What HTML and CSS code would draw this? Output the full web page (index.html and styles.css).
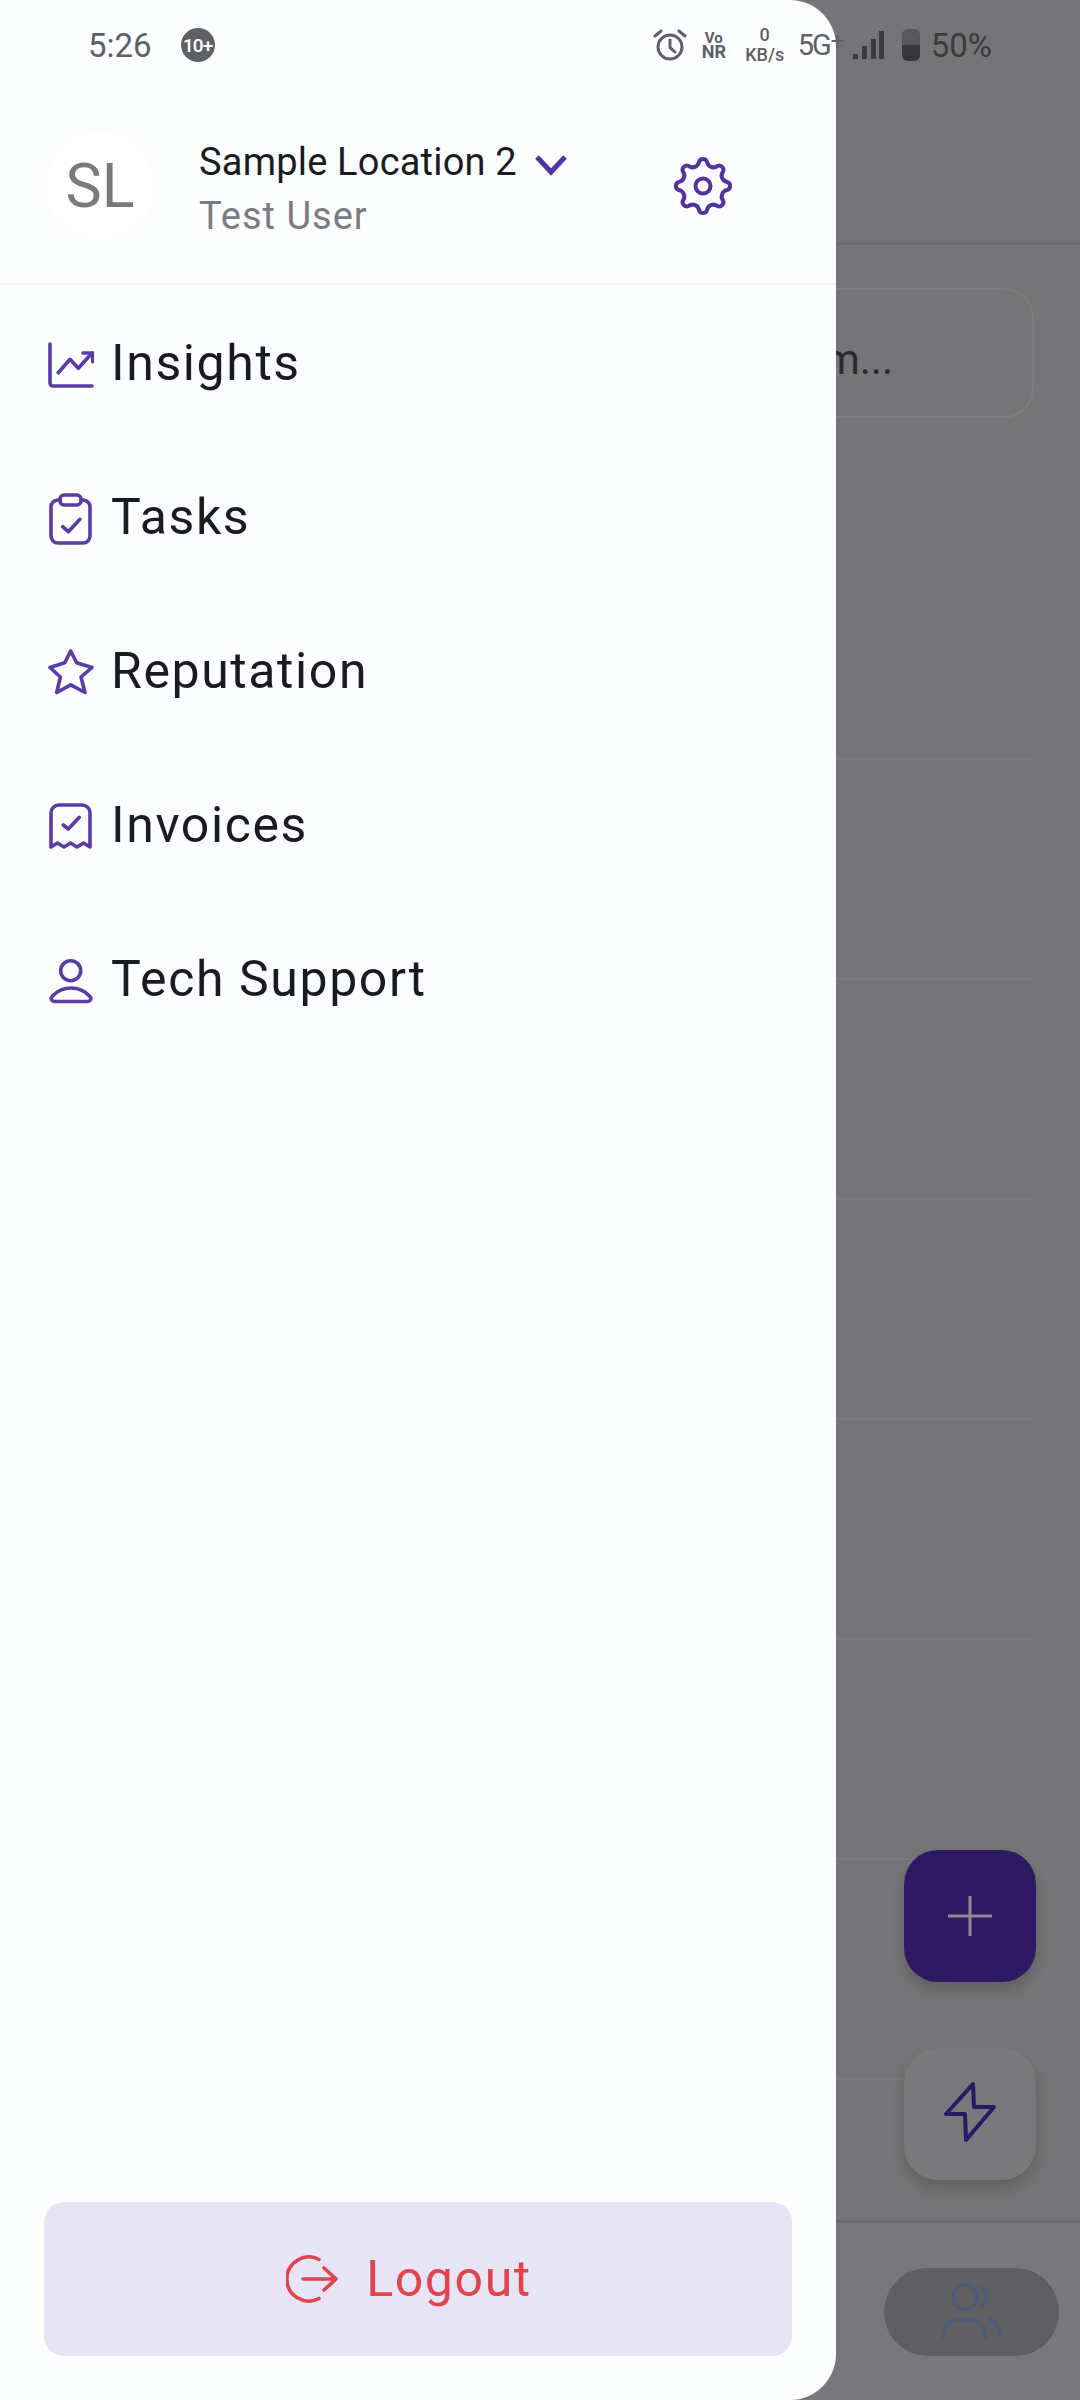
FILE: index.html
```html
<!DOCTYPE html>
<html lang="en">
<head>
  <meta charset="UTF-8" />
  <meta name="viewport" content="width=device-width, initial-scale=1.0"/>
  <title>Navigation drawer</title>
  <link rel="stylesheet" href="styles.css">
</head>
<body>
  <div class="screen">

    <!-- page behind the scrim -->
    <div class="backdrop">
      <div class="bd-header"></div>
      <div class="bd-search">m...</div>
      <div class="bd-list">
        <div class="bd-row"></div>
        <div class="bd-row"></div>
        <div class="bd-row"></div>
        <div class="bd-row"></div>
        <div class="bd-row"></div>
        <div class="bd-row"></div>
        <div class="bd-row"></div>
      </div>
      <div class="bd-nav">
        <div class="bd-pill">
          <svg class="people-icon" viewBox="0 0 64 64">
            <circle cx="25" cy="17" r="12"/>
            <path d="M40 7a11 11 0 0 1 0 20"/>
            <path d="M3 58c0-10 6-18 14-18h12c9 0 17 8 17 18"/>
            <path d="M50 39c6 3 10 10 10 19"/>
          </svg>
        </div>
      </div>
      <div class="fab fab-add">
        <svg class="plus-icon" viewBox="0 0 44 40"><path d="M0 20H44M22 0V40"/></svg>
      </div>
      <div class="fab fab-bolt">
        <svg class="bolt-icon" viewBox="0 0 60 70"><path d="M33 5 6 35H25L26 61 54 28H34Z"/></svg>
      </div>
    </div>

    <!-- drawer -->
    <aside class="drawer">
      <header class="drawer-head">
        <div class="avatar">SL</div>
        <div class="who">
          <div class="who-name">
            <span>Sample Location 2</span>
            <svg class="chevron" viewBox="0 0 34 22"><path d="M3 3 17 18 31 3"/></svg>
          </div>
          <div class="who-user">Test User</div>
        </div>
        <svg class="gear" viewBox="-30 -30 60 60">
          <path d="M-4-24.2A4.2 4.2 0 0 1 4-24.2A6.5 6.5 0 0 0 14.28-19.94A4.2 4.2 0 0 1 19.94-14.28A6.5 6.5 0 0 0 24.2-4A4.2 4.2 0 0 1 24.2 4A6.5 6.5 0 0 0 19.94 14.28A4.2 4.2 0 0 1 14.28 19.94A6.5 6.5 0 0 0 4 24.2A4.2 4.2 0 0 1-4 24.2A6.5 6.5 0 0 0-14.28 19.94A4.2 4.2 0 0 1-19.94 14.28A6.5 6.5 0 0 0-24.2 4A4.2 4.2 0 0 1-24.2-4A6.5 6.5 0 0 0-19.94-14.28A4.2 4.2 0 0 1-14.28-19.94A6.5 6.5 0 0 0-4-24.2Z"/>
          <circle cx="0" cy="0" r="7.5"/>
        </svg>
      </header>

      <nav class="menu">
        <a class="menu-item">
          <svg class="menu-icon" viewBox="0 0 46 52">
            <path d="M2 5V44a3 3 0 0 0 3 3H44"/>
            <path d="M10.3 33.7 22 20.3 30.3 29.3 44 14"/>
            <path d="M35 14H44.7V22.7"/>
          </svg>
          <span>Insights</span>
        </a>
        <a class="menu-item">
          <svg class="menu-icon" viewBox="0 0 46 52">
            <path d="M12 7H10a7 7 0 0 0-7 7V43a7 7 0 0 0 7 7H35a7 7 0 0 0 7-7V14a7 7 0 0 0-7-7H33"/>
            <rect x="12" y="2" width="21" height="10" rx="4"/>
            <path d="M14.7 33.7 20.3 38.7 32 26.3"/>
          </svg>
          <span>Tasks</span>
        </a>
        <a class="menu-item">
          <svg class="menu-icon" viewBox="0 0 46 52">
            <path d="M22.7 4 28.6 15.8 44 20.5 33 30 37 45.5 22.7 37.8 8.7 45.5 12.4 30 2 20.5 16.8 15.8Z"/>
          </svg>
          <span>Reputation</span>
        </a>
        <a class="menu-item">
          <svg class="menu-icon" viewBox="0 0 46 52">
            <path d="M3 46V12a8 8 0 0 1 8-8H34a8 8 0 0 1 8 8V46L35.500 42 29 46 22.500 42 16 46 9.500 42Z"/>
            <path d="M15.300 24 20.300 28 31.300 16.300"/>
          </svg>
          <span>Invoices</span>
        </a>
        <a class="menu-item">
          <svg class="menu-icon" viewBox="0 0 46 52">
            <circle cx="22.700" cy="15.700" r="10"/>
            <path d="M6 46.500H40a3 3 0 0 0 2-5C37 36 30 33 23 33S9 36 4 41.500a3 3 0 0 0 2 5Z"/>
          </svg>
          <span>Tech Support</span>
        </a>
      </nav>

      <button class="logout">
        <svg class="logout-icon" viewBox="0 0 52 48">
          <path d="M33 4.500A22 22 0 1 0 33 43.500"/>
          <path d="M17 24H50M38 13 50 24 38 35"/>
        </svg>
        <span>Logout</span>
      </button>
    </aside>

    <!-- status bar sits on top of both -->
    <div class="statusbar">
      <span class="time">5:26</span>
      <span class="notif">10+</span>
      <div class="status-right">
        <svg class="alarm" viewBox="0 0 34 34">
          <circle cx="17" cy="19" r="12"/>
          <path d="M17 12V19.500L22 24"/>
          <path d="M2 8 8 3M32 8 26 3"/>
        </svg>
        <div class="vonr">Vo NR</div>
        <div class="speed">0 KB/s</div>
        <div class="net">5G<span class="net-plus">+</span></div>
        <svg class="signal" viewBox="0 0 32 28">
          <rect x="0" y="23" width="5" height="5"/>
          <rect x="9" y="15" width="5" height="13"/>
          <rect x="18" y="8" width="5" height="20"/>
          <rect x="26" y="0" width="5" height="28"/>
        </svg>
        <div class="battery"><div class="battery-fill"></div></div>
        <span class="pct">50%</span>
      </div>
    </div>

  </div>
</body>
</html>
```

FILE: styles.css
```css
* {
  box-sizing: border-box;
}

body {
  margin: 0;
  font-family: Roboto, 'Liberation Sans', sans-serif;
}

.screen {
  position: relative;
  width: 1080px;
  height: 2400px;
  overflow: hidden;
  background-color: #757476;
}

/* ---- page behind the scrim ---- */
.backdrop {
  display: flex;
  flex-direction: column;
  height: 100%;
}

.bd-header {
  height: 245px;
  flex: none;
  border-bottom: 3px solid #6c6b6d;
}

.bd-search {
  height: 130px;
  flex: none;
  margin: 43px 46px 0;
  padding: 47px 139px 0 0;
  border: 2px solid #7d7c7e;
  border-radius: 30px;
  text-align: right;
  font-size: 42px;
  line-height: 46px;
  color: #2b2a2d;
}

.bd-list {
  margin: 122px 46px 0;
  flex: none;
}

.bd-row {
  height: 220px;
  border-bottom: 2px solid #7b7a7c;
}

.bd-nav {
  margin-top: auto;
  height: 180px;
  flex: none;
  display: flex;
  justify-content: flex-end;
  padding: 45px 21px 0 0;
  border-top: 3px solid #6b6877;
  background-color: #78787a;
}

.bd-pill {
  width: 175px;
  height: 88px;
  display: flex;
  align-items: center;
  justify-content: center;
  border-radius: 44px;
  background-color: #5f5f63;
}

.people-icon {
  width: 64px;
  height: 64px;
  fill: none;
  stroke: #4d5a78;
  stroke-width: 3.5;
  stroke-linecap: round;
}

.fab {
  position: absolute;
  left: 904px;
  width: 132px;
  height: 132px;
  display: flex;
  align-items: center;
  justify-content: center;
  border-radius: 34px;
  box-shadow: 0 8px 14px rgba(0, 0, 0, 0.18);
}

.fab-add {
  top: 1850px;
  background-color: #2e1a63;
}

.fab-bolt {
  top: 2048px;
  background-color: #79787b;
}

.plus-icon {
  width: 44px;
  height: 40px;
  fill: none;
  stroke: #8c8791;
  stroke-width: 3;
}

.bolt-icon {
  width: 60px;
  height: 70px;
  fill: none;
  stroke: #2a1a66;
  stroke-width: 4;
  stroke-linejoin: round;
}

/* ---- drawer ---- */
.drawer {
  position: absolute;
  top: 0;
  left: 0;
  width: 836px;
  height: 2400px;
  display: flex;
  flex-direction: column;
  border-radius: 0 46px 46px 0;
  background-color: #fcfdff;
}

.drawer-head {
  height: 285px;
  flex: none;
  display: flex;
  align-items: center;
  padding: 88px 103px 0 46px;
  border-bottom: 2px solid #f3f3f7;
}

.avatar {
  width: 108px;
  height: 108px;
  flex: none;
  display: flex;
  align-items: center;
  justify-content: center;
  border-radius: 50%;
  background-color: #ffffff;
  font-size: 61px;
  color: #7a797d;
}

.who {
  margin: 7px 0 0 45px;
}

.who-name {
  display: flex;
  align-items: center;
  font-size: 38px;
  line-height: 52px;
  letter-spacing: 0.2px;
  color: #1a1b20;
}

.chevron {
  width: 34px;
  height: 22px;
  margin: 6px 0 0 17px;
  fill: none;
  stroke: #53339f;
  stroke-width: 5;
}

.who-user {
  margin-top: 2px;
  font-size: 38px;
  line-height: 52px;
  letter-spacing: 1px;
  color: #7b7b80;
}

.gear {
  width: 60px;
  height: 60px;
  margin-left: auto;
  fill: none;
  stroke: #53339f;
  stroke-width: 4;
}

.menu {
  flex: none;
}

.menu-item {
  height: 154px;
  display: flex;
  align-items: center;
  padding: 2px 0 0 48px;
  font-size: 50px;
  letter-spacing: 1.6px;
  color: #1a1b20;
}

.menu-icon {
  width: 46px;
  height: 52px;
  flex: none;
  margin: 4px 17px 0 0;
  fill: none;
  stroke: #5b3ba6;
  stroke-width: 3.6;
  stroke-linecap: round;
  stroke-linejoin: round;
}

.logout {
  height: 154px;
  flex: none;
  margin: auto 44px 44px;
  padding: 0 18px 0 0;
  display: flex;
  align-items: center;
  justify-content: center;
  border: none;
  border-radius: 20px;
  background-color: #e7e4f5;
  font-family: inherit;
  font-size: 50px;
  letter-spacing: 1.6px;
  color: #e0444c;
}

.logout-icon {
  width: 52px;
  height: 48px;
  margin-right: 28px;
  fill: none;
  stroke: #e0444c;
  stroke-width: 3.6;
  stroke-linecap: round;
  stroke-linejoin: round;
}

/* ---- status bar ---- */
.statusbar {
  position: absolute;
  top: 0;
  left: 0;
  width: 1080px;
  height: 90px;
  display: flex;
  align-items: center;
  padding: 0 88px 0 88px;
  color: #5f6063;
}

.time {
  font-size: 33px;
}

.notif {
  width: 34px;
  height: 34px;
  margin-left: 29px;
  display: flex;
  align-items: center;
  justify-content: center;
  border-radius: 50%;
  background-color: #5f6063;
  font-size: 19px;
  font-weight: 500;
  letter-spacing: -1px;
  color: #ffffff;
}

.status-right {
  margin-left: auto;
  display: flex;
  align-items: center;
}

.alarm {
  width: 34px;
  height: 34px;
  margin-left: 1px;
  fill: none;
  stroke: #5f6063;
  stroke-width: 3;
  stroke-linecap: round;
}

.vonr {
  width: 24px;
  margin-left: 15px;
  text-align: center;
  font-size: 18px;
  line-height: 14px;
  font-weight: 700;
}

.vonr::first-line {
  font-size: 15px;
}

.speed {
  width: 42px;
  margin-left: 18px;
  text-align: center;
  font-size: 18px;
  line-height: 20px;
  font-weight: 500;
}

.net {
  width: 45px;
  margin-left: 12px;
  font-size: 29px;
  letter-spacing: -2px;
  white-space: nowrap;
}

.net-plus {
  position: relative;
  top: -6px;
  margin-left: 1px;
  font-size: 24px;
}

.signal {
  width: 32px;
  height: 28px;
  margin-left: 10px;
  fill: #3c3b3e;
}

.battery {
  width: 18px;
  height: 32px;
  margin-left: 17px;
  display: flex;
  align-items: flex-end;
  overflow: hidden;
  border-radius: 6px;
  background-color: #59575b;
}

.battery-fill {
  width: 100%;
  height: 50%;
  background-color: #373639;
}

.pct {
  margin-left: 11px;
  font-size: 33px;
  color: #3b3a3d;
}
```
